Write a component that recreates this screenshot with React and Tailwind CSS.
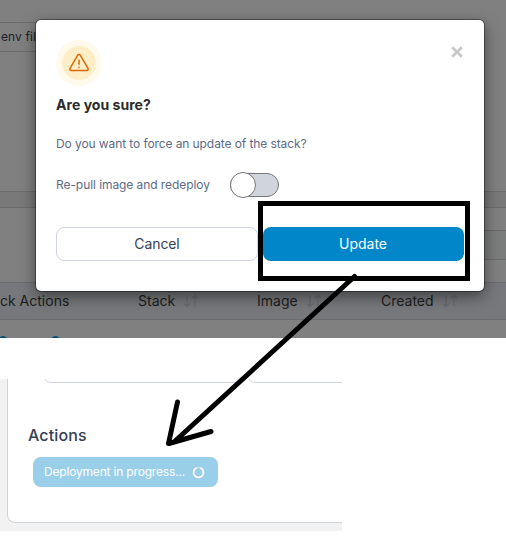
import React from "react";

function SortArrows() {
  return (
    <svg width="16" height="14" viewBox="0 0 16 14" fill="none" stroke="#696a6d" strokeWidth="1.3">
      <path d="M4 1.5v11M1 9.5l3 3 3-3M12 12.5v-11M9 4.5l3-3 3 3" />
    </svg>
  );
}

function Column({ label, className }) {
  return (
    <div className={`flex shrink-0 items-center gap-2 ${className}`}>
      <span>{label}</span>
      <SortArrows />
    </div>
  );
}

function StacksPage() {
  return (
    <div className="flex h-[338px] flex-col overflow-hidden bg-[#808080]">
      <div className="mt-[22px] flex h-[30px] w-[60px] shrink-0 items-center border-y border-[#6a6a6c] pl-px text-[12px] tracking-[0.1px] whitespace-nowrap text-[#1b2029]">
        env file
      </div>
      <div className="mt-[139px] h-[17px] shrink-0 border-y border-[#6b6b6d] bg-[#797979]" />
      <div className="mt-[22px] ml-[400px] h-[30px] shrink-0 border-y border-[#6b6b6d] bg-[#7b7c7c]" />
      <div className="mt-[22px] flex h-[38px] shrink-0 items-center border-y border-[#6b6b6d] bg-[#77787b] pb-px text-[14px] text-[#1c1d20]">
        <span className="w-[138px] whitespace-nowrap">ck Actions</span>
        <Column label="Stack" className="w-[119px]" />
        <Column label="Image" className="w-[124px]" />
        <Column label="Created" className="" />
      </div>
      <div className="flex pt-4">
        <span className="-ml-[2px] size-[10px] shrink-0 rounded-full border-2 border-[#0b5078]" />
        <span className="ml-[43px] size-[9px] shrink-0 rounded-full border-2 border-[#0b5078]" />
      </div>
    </div>
  );
}

function WarningIcon() {
  return (
    <div className="flex size-[46px] items-center justify-center rounded-full bg-[#fffaeb]">
      <div className="flex size-[34px] items-center justify-center rounded-full bg-[#feeec7]">
        <svg width="22" height="20" viewBox="0 0 22 20" fill="none" stroke="#dc6803" strokeWidth="1.5" strokeLinecap="round" strokeLinejoin="round">
          <path d="M9.600 2.400 2 15.400a1.400 1.400 0 0 0 1.200 2.100h15.600a1.400 1.400 0 0 0 1.200-2.100L12.400 2.400a1.600 1.600 0 0 0-2.800 0Z" />
          <path d="M11 7.200v4M11 14.300v.1" />
        </svg>
      </div>
    </div>
  );
}

function ConfirmDialog() {
  return (
    <div className="absolute top-5 left-9 flex h-[271px] w-[448px] flex-col rounded-[5px] bg-white px-5 pt-5 shadow-[0_0_0_1px_rgba(0,0,0,0.35),0_5px_15px_rgba(0,0,0,0.5)]">
      <div className="flex items-start justify-between">
        <WarningIcon />
        <svg className="mt-[6px] mr-px" width="12" height="12" viewBox="0 0 12 12" stroke="#c8c8c8" strokeWidth="2.8">
          <path d="m1.2 1.2 9.6 9.6M10.8 1.2 1.2 10.8" />
        </svg>
      </div>
      <h2 className="mt-[9px] text-[14px] leading-5 font-bold tracking-[0.04px] text-[#2b2b2b]">Are you sure?</h2>
      <p className="mt-[19px] text-[12px] leading-5 tracking-[-0.09px] text-[#5d6b85]">Do you want to force an update of the stack?</p>
      <div className="mt-[18px] flex h-[26px] items-center text-[12px] tracking-[-0.07px] text-[#5d6b85]">
        <span className="w-[174px]">Re-pull image and redeploy</span>
        <span className="flex h-6 w-[49px] items-center rounded-full border border-[#777] bg-[#d0d5dd]">
          <span className="-ml-px size-[26px] shrink-0 rounded-full border border-[#777] bg-white" />
        </span>
      </div>
      <div className="mt-[29px] flex gap-[5px] text-[14px]">
        <button className="h-[34px] w-[202px] rounded-lg border border-[#d0d5dd] pb-px tracking-[-0.1px] text-[#344054]">Cancel</button>
        <button className="h-[34px] w-[201px] rounded-lg bg-[#0086c9] pr-px pb-px text-white">Update</button>
      </div>
    </div>
  );
}

function ActionsPanel() {
  return (
    <div className="mt-[41px] h-[152px] w-[342px] overflow-hidden bg-[#f2f2f2] pl-[7px]">
      <div className="h-[144px] w-[360px] overflow-hidden rounded-bl-[8px] border-b border-l border-[#d0d5dd] bg-white pl-5">
        <div className="-mt-4 flex gap-[2px] pl-[15px]">
          <div className="h-5 w-[202px] shrink-0 rounded-[8px] border border-[#d0d5dd]" />
          <div className="h-5 w-[202px] shrink-0 rounded-[8px] border border-[#d0d5dd]" />
        </div>
        <h3 className="mt-[42px] text-[16px] leading-5 font-medium tracking-[0.15px] text-[#344054]">Actions</h3>
        <button className="mt-3 ml-[5px] flex h-[30px] w-[185px] items-center rounded-lg bg-[#99cfe9] pl-[11px] text-[12px] text-white">
          <span className="w-[148px] text-left tracking-[-0.18px] whitespace-nowrap">Deployment in progress...</span>
          <svg width="13" height="13" viewBox="0 0 13 13" fill="none" stroke="white" strokeWidth="1.6">
            <circle cx="6.5" cy="6.5" r="5" opacity="0.5" />
            <path d="M8.5 1.9A5 5 0 1 1 4.5 1.9" />
          </svg>
        </button>
      </div>
    </div>
  );
}

function Annotations() {
  return (
    <svg className="pointer-events-none absolute inset-0" width="506" height="536" viewBox="0 0 506 536" fill="none" stroke="#000" strokeWidth="5" strokeLinecap="round">
      <path d="M260.5 203.5h207v75h-207z" strokeLinecap="butt" />
      <path d="M354.500 276.500 174 442M177.500 402 168.500 443.500M169 443.500 211 431.500" />
    </svg>
  );
}

export default function App() {
  return (
    <main className="relative h-[536px] w-[506px] overflow-hidden bg-white font-['Inter',sans-serif]">
      <StacksPage />
      <ActionsPanel />
      <ConfirmDialog />
      <Annotations />
    </main>
  );
}
